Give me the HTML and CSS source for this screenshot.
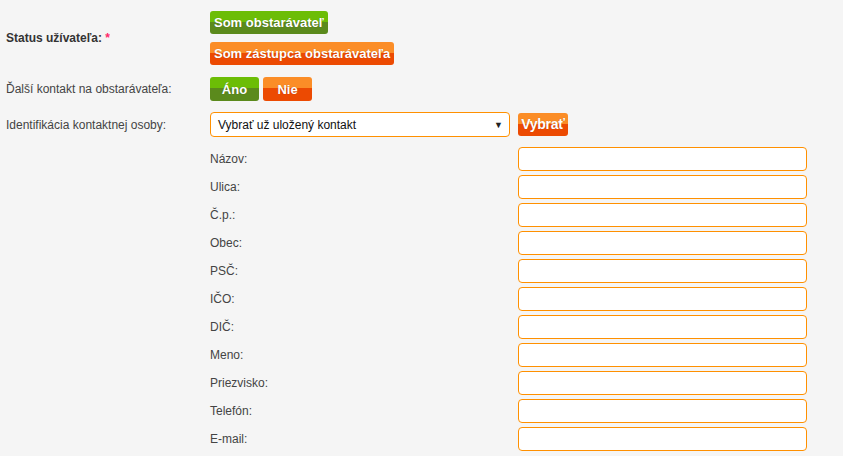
FILE: index.html
```html
<!DOCTYPE html>
<html lang="sk">
<head>
<meta charset="utf-8">
<link rel="stylesheet" href="styles.css">
</head>
<body>
<form class="form">
  <div class="row row-status">
    <div class="label label-strong">Status užívateľa: <span class="req">*</span></div>
    <div class="ctrl ctrl-stack">
      <div><button type="button" class="btn btn-green">Som obstarávateľ</button></div>
      <div><button type="button" class="btn btn-orange">Som zástupca obstarávateľa</button></div>
    </div>
  </div>
  <div class="row row-contact">
    <div class="label">Ďalší kontakt na obstarávateľa:</div>
    <div class="ctrl ctrl-inline">
      <button type="button" class="btn btn-green btn-yes">Áno</button>
      <button type="button" class="btn btn-orange btn-no">Nie</button>
    </div>
  </div>
  <div class="row row-ident">
    <div class="label">Identifikácia kontaktnej osoby:</div>
    <div class="ctrl ctrl-inline">
      <div class="select"><span>Vybrať už uložený kontakt</span><span class="arrow">▼</span></div>
      <button type="button" class="btn btn-orange btn-pick">Vybrať</button>
    </div>
  </div>
  <div class="fields">
    <div class="field"><label>Názov:</label><input type="text"></div>
    <div class="field"><label>Ulica:</label><input type="text"></div>
    <div class="field"><label>Č.p.:</label><input type="text"></div>
    <div class="field"><label>Obec:</label><input type="text"></div>
    <div class="field"><label>PSČ:</label><input type="text"></div>
    <div class="field"><label>IČO:</label><input type="text"></div>
    <div class="field"><label>DIČ:</label><input type="text"></div>
    <div class="field"><label>Meno:</label><input type="text"></div>
    <div class="field"><label>Priezvisko:</label><input type="text"></div>
    <div class="field"><label>Telefón:</label><input type="text"></div>
    <div class="field"><label>E-mail:</label><input type="text"></div>
  </div>
</form>
</body>
</html>
```
FILE: styles.css
```css
html, body {
  margin: 0;
  padding: 0;
  background: #f5f5f5;
}
body {
  font-family: "Liberation Sans", Arial, sans-serif;
  font-size: 12px;
  color: #444;
}
.form {
  padding: 11px 0 0 6px;
}
.row {
  display: flex;
  align-items: center;
}
.label {
  width: 204px;
  flex: none;
}
.label-strong {
  font-weight: bold;
  color: #333;
}
.req {
  color: #ff2a6a;
}
.ctrl-stack {
  display: flex;
  flex-direction: column;
  gap: 8px;
}
.ctrl-inline {
  display: flex;
  align-items: center;
  gap: 4px;
}
.row-contact {
  margin-top: 12px;
}
.row-ident {
  margin-top: 11px;
}
.btn {
  font-family: "Liberation Sans", Arial, sans-serif;
  font-weight: bold;
  font-size: 13px;
  color: #fff;
  border: 0;
  border-radius: 3px;
  height: 23px;
  padding: 0 4px;
  line-height: 23px;
  cursor: pointer;
  text-shadow: 0 0 1px rgba(0,0,0,0.25);
}
.btn-green {
  background: linear-gradient(to bottom, #6cbd06 0%, #6cbd06 46%, #5b8a1c 46%, #5b8a1c 100%);
}
.btn-orange {
  background: linear-gradient(to bottom, #fb8d27 0%, #fb8d27 46%, #ec4a02 46%, #ec4a02 100%);
}
.btn-yes, .btn-no {
  width: 49px;
  height: 24px;
}
.btn-no {
  margin-left: 0;
}
.btn-pick {
  width: 50px;
  height: 23px;
  margin-left: 4px;
  padding: 0;
  font-size: 14px;
  letter-spacing: -0.3px;
}
.select {
  width: 300px;
  height: 25px;
  box-sizing: border-box;
  border: 1px solid #ff9000;
  border-radius: 4px;
  background: #fff;
  display: flex;
  align-items: center;
  justify-content: space-between;
  padding: 0 6px 0 7px;
  color: #111;
  font-size: 12px;
}
.arrow {
  font-size: 9px;
  color: #222;
}
.fields {
  margin-top: 10px;
  padding-left: 204px;
  display: flex;
  flex-direction: column;
  gap: 4px;
}
.field {
  display: flex;
  align-items: center;
}
.field label {
  width: 308px;
  flex: none;
}
.field input {
  width: 289px;
  height: 24px;
  box-sizing: border-box;
  border: 1px solid #ff9000;
  border-radius: 4px;
  background: #fff;
  margin: 0;
  padding: 0 4px;
}
```
